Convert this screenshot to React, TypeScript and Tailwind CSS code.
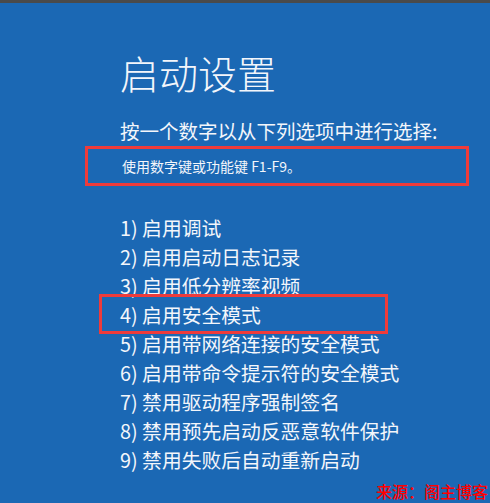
const items = [
  "1) 启用调试",
  "2) 启用启动日志记录",
  "3) 启用低分辨率视频",
  "4) 启用安全模式",
  "5) 启用带网络连接的安全模式",
  "6) 启用带命令提示符的安全模式",
  "7) 禁用驱动程序强制签名",
  "8) 禁用预先启动反恶意软件保护",
  "9) 禁用失败后自动重新启动",
];

export default function App() {
  return (
    <div
      className="relative h-[503px] w-[490px] overflow-hidden border-t-[3px] border-[#4a4a4a] bg-[#1b68b4] pl-[120px] pt-[45px] text-[#f3f6fb]"
      style={{ fontFamily: '"Noto Sans CJK SC", "Noto Sans", sans-serif' }}
    >
      <h1 className="text-[39px] font-light leading-[48px]">启动设置</h1>

      <p className="mt-[23px] text-[19.5px] leading-[24px]">按一个数字以从下列选项中进行选择:</p>

      <div className="-ml-[35px] mt-[3px] flex h-[40px] w-[384px] items-center border-[3px] border-[#ee3b3b] pl-[34px] text-[14px]">
        使用数字键或功能键 F1-F9。
      </div>

      <ul className="mt-[27px] text-[19.8px] leading-[29px]">
        {items.map((item, i) => (
          <li key={item} className="relative">
            {item}
            {i === 3 && (
              <span className="absolute -left-[21px] -top-[6px] h-[40px] w-[289px] border-[3px] border-[#ee3b3b]" />
            )}
          </li>
        ))}
      </ul>

      <div className="absolute bottom-[3px] right-[2px] text-[16px] font-medium leading-[18px] text-[#ff0000]">
        来源：阁主博客
      </div>
    </div>
  );
}
